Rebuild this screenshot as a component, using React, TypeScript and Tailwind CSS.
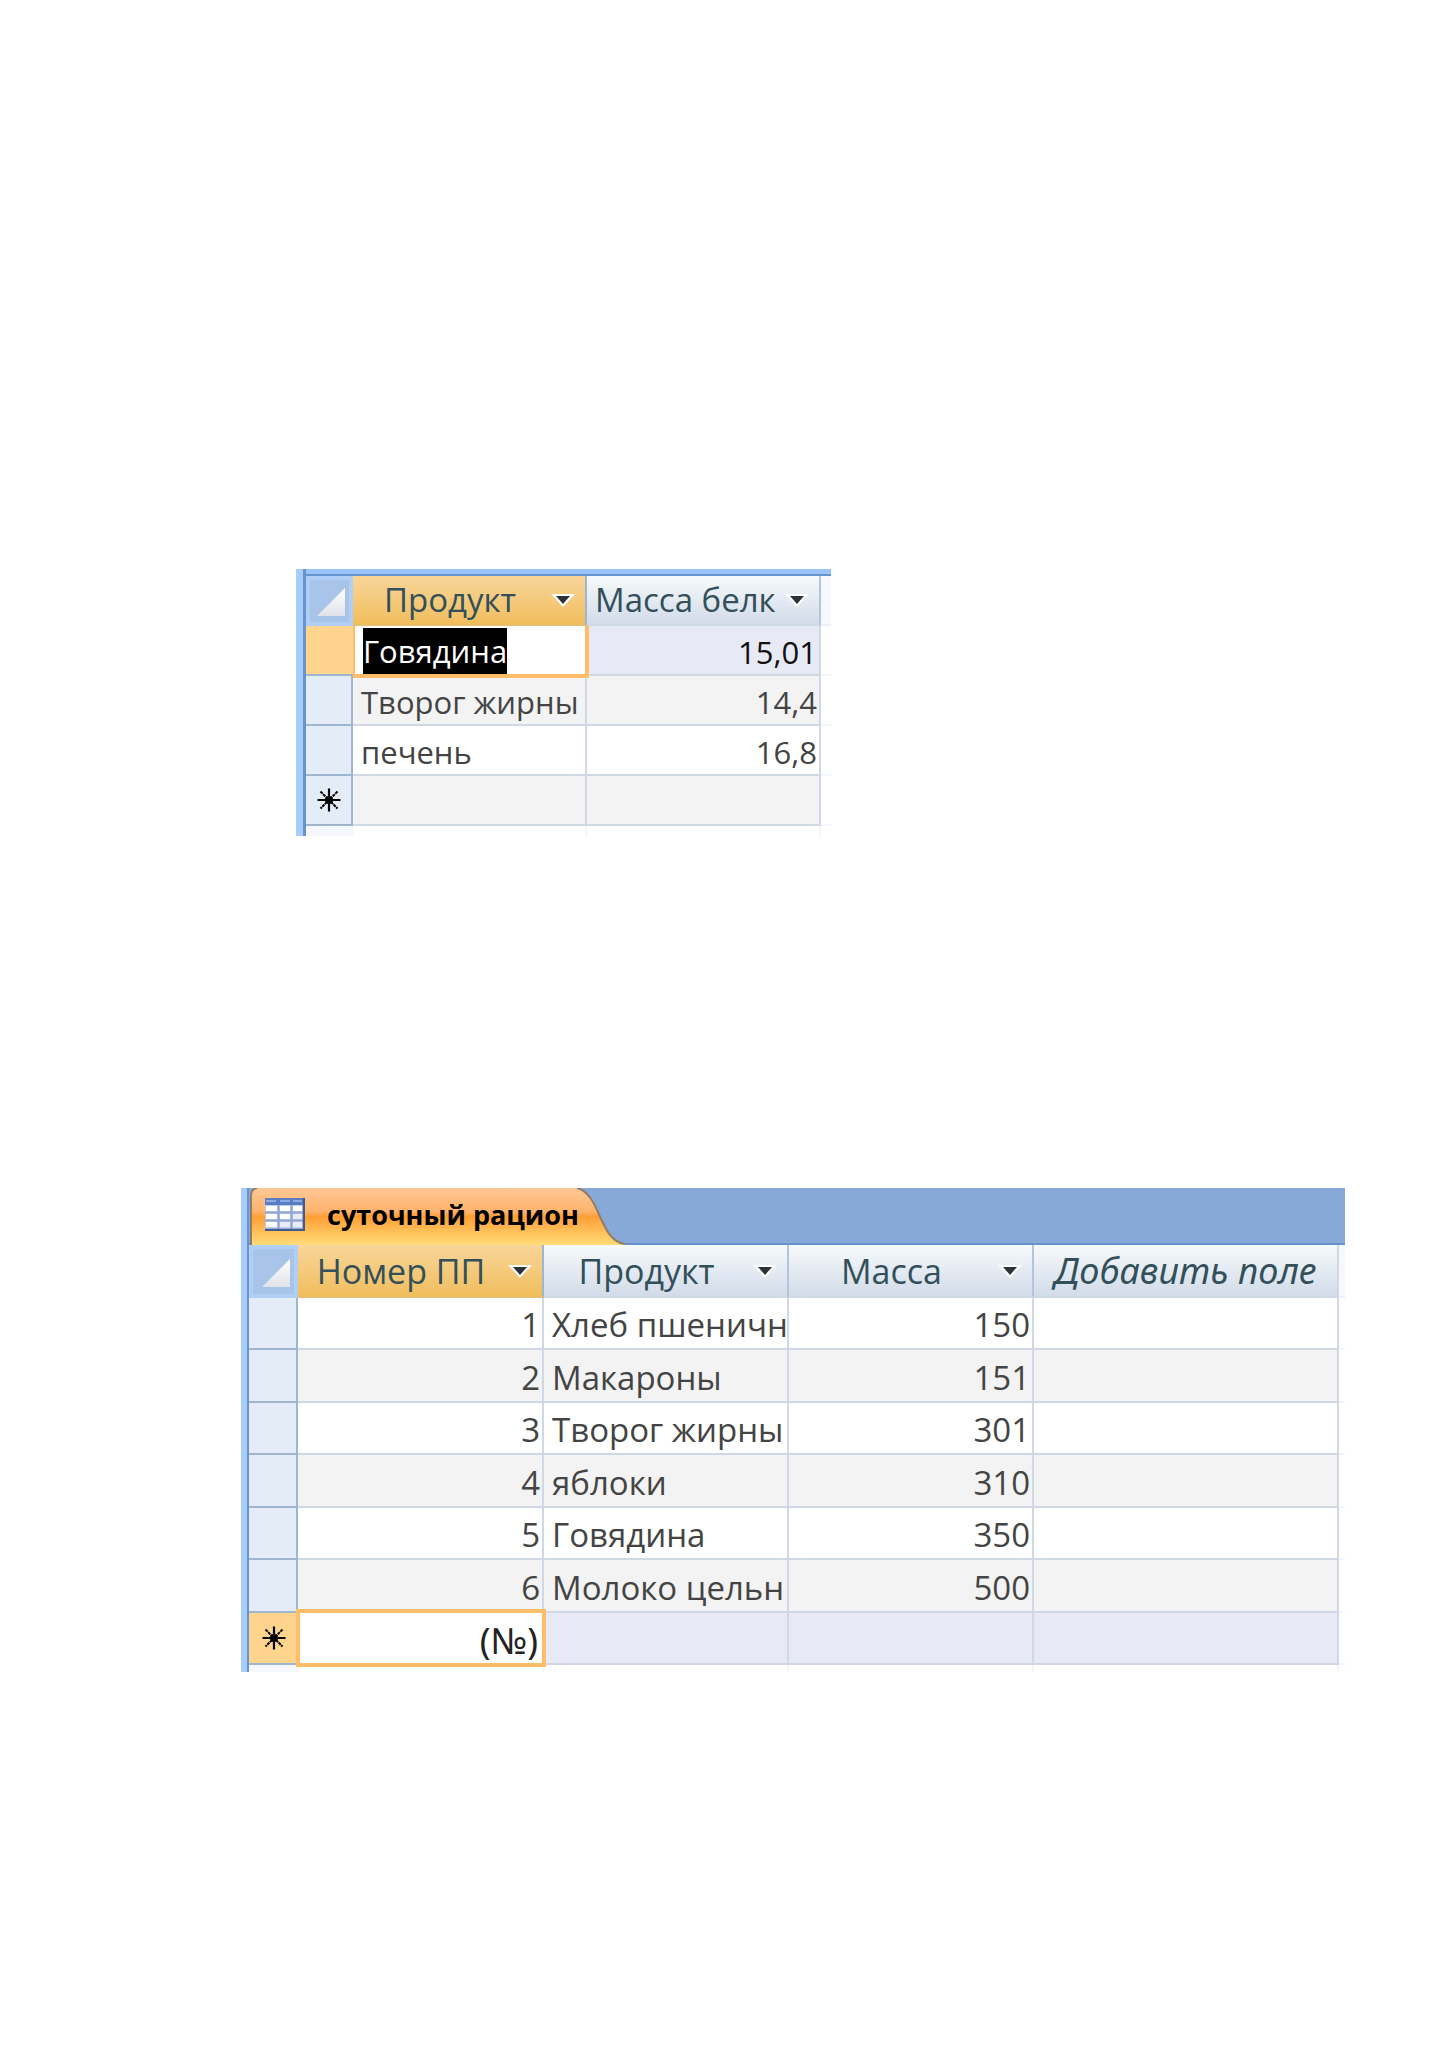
import React from 'react';
import { clsx } from 'clsx';

const products = [
  { name: 'Творог жирны', protein: '14,4' },
  { name: 'печень', protein: '16,8' },
];

const ration = [
  { id: 1, name: 'Хлеб пшеничн', mass: 150 },
  { id: 2, name: 'Макароны', mass: 151 },
  { id: 3, name: 'Творог жирны', mass: 301 },
  { id: 4, name: 'яблоки', mass: 310 },
  { id: 5, name: 'Говядина', mass: 350 },
  { id: 6, name: 'Молоко цельн', mass: 500 },
];

const line = 'border-r-2 border-b-2 border-[#d0d7e5]';
const selector = 'border-r-2 border-b-2 border-[#9eb6ce] bg-[#e4ecf7] p-0';
const margin = 'border-b-2 border-[#f3f5fb] p-0';
const text = 'overflow-hidden pt-1 pr-0 pb-0 pl-2 whitespace-nowrap';
const number = 'pt-1 pr-0.5 pb-0 pl-2 text-right';

function NewRowMark() {
  return (
    <svg viewBox="0 0 24 24" className="mx-auto size-6" stroke="#000" aria-label="Новая запись">
      <path d="M12 0.5V23.5M0.5 12H23.5" strokeWidth="2.2" />
      <path d="M3.5 3.5L20.5 20.5M20.5 3.5L3.5 20.5" strokeWidth="2" strokeDasharray="3 0.7" />
      <circle cx="12" cy="12" r="4" fill="#000" stroke="none" />
    </svg>
  );
}

function SelectAll() {
  return (
    <th className="border-4 border-[#b0cff7] bg-[#a9c4e9] p-0">
      <button aria-label="Выделить все" className="flex w-full items-end justify-end pt-1 pr-1 pb-0.5">
        <svg viewBox="0 0 28 28" className="size-7">
          <defs>
            <linearGradient id="corner" x1="0" y1="0" x2="0" y2="1">
              <stop offset="0" stopColor="#fff" />
              <stop offset="1" stopColor="#dfe2e8" />
            </linearGradient>
          </defs>
          <path d="M28 0V28H0Z" fill="url(#corner)" />
        </svg>
      </button>
    </th>
  );
}

interface HeaderCellProps {
  title: string;
  active?: boolean;
  tight?: boolean;
}

function HeaderCell({ title, active, tight }: HeaderCellProps) {
  return (
    <th
      className={clsx(
        'border-r-2 border-b-2 p-0 font-normal text-[#33505a]',
        active
          ? 'border-r-[#9eb6ce] border-b-[#e8bd6c] bg-linear-to-b from-[#f8d599] to-[#f0be5c]'
          : 'border-r-[#b3c5dd] border-b-[#d0d7e5] bg-linear-to-b from-[#f6fafb] to-[#d2dbe9]'
      )}
    >
      <div className={clsx('flex items-center pr-2.5', tight && 'pl-2')}>
        <span className={clsx('min-w-0 flex-1 overflow-hidden whitespace-nowrap', tight ? 'text-left' : 'text-center')}>
          {title}
        </span>
        <button aria-label={title} className="shrink-0 pl-1">
          <svg viewBox="0 0 24 14" className="h-3.5 w-6">
            <path d="M0 1H24L12 14Z" fill="#fff" />
            <path d="M5 3H19L12 11Z" fill="#2b3338" />
          </svg>
        </button>
      </div>
    </th>
  );
}

function ProteinTable() {
  return (
    <section className="flex w-[37%] min-w-[535px] border-l-7 border-[#a9cdfb] text-[31px] leading-[44px]">
      <div className="min-w-0 flex-1 border-l-3 border-[#6793cf]">
        <div className="h-[7px] border-b-2 border-[#6593cf] bg-[#9cc3f8]" />
        <table className="w-full table-fixed border-separate border-spacing-0">
          <colgroup>
            <col className="w-[47px]" />
            <col className="w-[234px]" />
            <col className="w-[234px]" />
            <col />
          </colgroup>
          <thead className="text-[33px]">
            <tr className="h-[50px]">
              <SelectAll />
              <HeaderCell title="Продукт" active />
              <HeaderCell title="Масса белк" tight />
              <td className="border-b-2 border-[#edf0f8] bg-[#f6f8fd] p-0" />
            </tr>
          </thead>
          <tbody className="text-[#444]">
            <tr className="h-[50px]">
              <td className="border-b-2 border-[#9eb6ce] bg-[#ffd48d] p-0" />
              <td className="relative p-0">
                <div className="absolute top-0 -right-0.5 -bottom-0.5 left-0 border-r-4 border-b-4 border-l-2 border-[#ffbd69] bg-white pt-0.5 pl-2">
                  <input
                    aria-label="Продукт"
                    defaultValue="Говядина"
                    className="block h-[46px] field-sizing-content bg-black p-0 text-white outline-none"
                  />
                </div>
              </td>
              <td className={clsx(line, number, 'bg-[#e7eaf5] text-[#111]')}>15,01</td>
              <td className={margin} />
            </tr>
            {products.map((p, i) => (
              <tr key={p.name} className="h-[50px]">
                <td className={selector} />
                <td className={clsx(line, text, i % 2 === 0 && 'bg-[#f3f3f3]')}>{p.name}</td>
                <td className={clsx(line, number, i % 2 === 0 && 'bg-[#f3f3f3]')}>{p.protein}</td>
                <td className={margin} />
              </tr>
            ))}
            <tr className="h-[50px]">
              <td className={selector}><NewRowMark /></td>
              <td className={clsx(line, 'bg-[#f3f3f3] p-0')} />
              <td className={clsx(line, 'bg-[#f3f3f3] p-0')} />
              <td className={margin} />
            </tr>
            <tr className="h-[10px]">
              <td className="border-r-2 border-[#f3f5fb] bg-[#f6f8fd] p-0" />
              <td className="border-r-2 border-[#f3f5fb] p-0" />
              <td className="border-r-2 border-[#f3f5fb] p-0" />
              <td className="p-0" />
            </tr>
          </tbody>
        </table>
      </div>
    </section>
  );
}

function TabBar() {
  return (
    <div className="flex h-[57px] border-b-2 border-[#6593cf] bg-[#87a9d7]">
      <button className="relative -mb-0.5 flex h-[57px] w-[376px] items-center pb-1 pl-4 text-[27px] font-bold whitespace-nowrap text-black">
        <svg viewBox="0 0 376 57" preserveAspectRatio="none" className="absolute inset-0 h-full w-full">
          <defs>
            <linearGradient id="tab" x1="0" y1="0" x2="0" y2="1">
              <stop offset="0" stopColor="#ffc896" />
              <stop offset="0.42" stopColor="#ffb26a" />
              <stop offset="0.5" stopColor="#ff9f36" />
              <stop offset="1" stopColor="#ffdc78" />
            </linearGradient>
          </defs>
          <path d="M2 57V8Q2 1 8 0H328C352 6 350 53 376 56V57Z" fill="url(#tab)" />
          <path d="M2 57V8Q2 1 8 0M328 0C352 6 350 53 376 56" fill="none" stroke="#957a66" strokeWidth="2" />
        </svg>
        <svg viewBox="0 0 40 33" className="relative h-[33px] w-10">
          <path d="M0 0H40V33H0Z" fill="#c0cde8" />
          <path d="M0 0H40V7H0Z" fill="#5b7dc1" />
          <path d="M1 3H11M15 3H25M28 3H37" stroke="#8cabe3" strokeWidth="2" />
          <path d="M1 8H12V13H1ZM15 8H25V13H15ZM28 8H37V13H28ZM1 16H12V21H1ZM15 16H25V21H15ZM1 24H12V29H1Z" fill="#fff" />
          <path d="M28 16H37V21H28ZM15 24H25V29H15ZM28 24H37V29H28Z" fill="#e6ecfa" />
          <path d="M0 14.5H38M0 22.5H38M13.5 7V31M26.5 7V31" stroke="#91a6d4" strokeWidth="2" />
          <path d="M39 0V32H0" fill="none" stroke="#405a92" strokeWidth="2.5" />
        </svg>
        <span className="relative ml-[22px]">суточный рацион</span>
      </button>
    </div>
  );
}

function RationTable() {
  return (
    <section className="mr-[104px] ml-[-55px] flex border-l-6 border-[#a9cdfb] text-[33px] leading-[46px]">
      <div className="min-w-0 flex-1 border-l-2 border-[#6793cf]">
        <TabBar />
        <table className="w-full table-fixed border-separate border-spacing-0">
          <colgroup>
            <col className="w-[49px]" />
            <col className="w-[246px]" />
            <col className="w-[245px]" />
            <col className="w-[245px]" />
            <col />
            <col className="w-[6px]" />
          </colgroup>
          <thead className="text-[34px]">
            <tr className="h-[53px]">
              <SelectAll />
              <HeaderCell title="Номер ПП" active />
              <HeaderCell title="Продукт" />
              <HeaderCell title="Масса" />
              <th className="border-r-2 border-b-2 border-[#d0d7e5] bg-linear-to-b from-[#f6fafb] to-[#d2dbe9] p-0 font-['Noto_Sans',sans-serif] text-[36px] font-normal whitespace-nowrap text-[#33505a] italic">
                Добавить поле
              </th>
              <td className="border-b-2 border-[#edf0f8] bg-[#f6f8fd] p-0" />
            </tr>
          </thead>
          <tbody className="text-[#444]">
            {ration.map((r, i) => (
              <tr key={r.id} className={i % 2 === 0 ? 'h-[52px]' : 'h-[53px] bg-[#f3f3f3]'}>
                <td className={selector} />
                <td className={clsx(line, number)}>{r.id}</td>
                <td className={clsx(line, text)}>{r.name}</td>
                <td className={clsx(line, number)}>{r.mass}</td>
                <td className={clsx(line, 'p-0')} />
                <td className={clsx(margin, 'bg-white')} />
              </tr>
            ))}
            <tr className="h-[52px] bg-[#e7eaf5]">
              <td className="border-b-2 border-[#9eb6ce] bg-[#ffd48d] p-0"><NewRowMark /></td>
              <td className="relative p-0">
                <div className="absolute -top-1 -right-0.5 -bottom-0.5 -left-0.5 border-4 border-[#ffbd69] bg-white">
                  <input
                    aria-label="Номер ПП"
                    defaultValue="(№)"
                    className="block h-full w-full p-0 pt-1 pr-1 text-right font-['Noto_Sans',sans-serif] text-[36px] text-[#222] outline-none"
                  />
                </div>
              </td>
              <td className={clsx(line, 'p-0')} />
              <td className={clsx(line, 'p-0')} />
              <td className={clsx(line, 'p-0')} />
              <td className={clsx(margin, 'bg-white')} />
            </tr>
            <tr className="h-[7px]">
              <td className="border-r-2 border-[#f3f5fb] bg-[#f6f8fd] p-0" />
              <td className="border-r-2 border-[#f3f5fb] p-0" />
              <td className="border-r-2 border-[#f3f5fb] p-0" />
              <td className="border-r-2 border-[#f3f5fb] p-0" />
              <td className="border-r-2 border-[#f3f5fb] p-0" />
              <td className="p-0" />
            </tr>
          </tbody>
        </table>
      </div>
    </section>
  );
}

export default function App() {
  return (
    <main className="flex min-h-screen flex-col gap-[352px] bg-white pt-[569px] pb-40 pl-[296px] font-['Open_Sans','Noto_Sans',sans-serif]">
      <ProteinTable />
      <RationTable />
    </main>
  );
}
